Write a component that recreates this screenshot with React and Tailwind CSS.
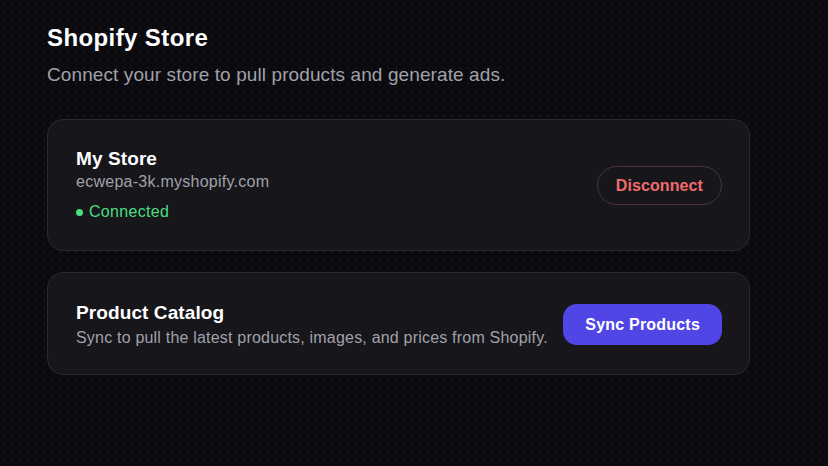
export default function App() {
  return (
    <div
      className="min-h-[466px] w-full bg-[#0a0a0f] bg-[radial-gradient(circle,rgba(255,255,255,0.045)_1px,transparent_1.2px)] bg-[length:8px_8px] px-[47px] pt-[22px] pb-10 text-white"
      style={{ fontFamily: '"Liberation Sans", Arial, sans-serif' }}
    >
      <div className="w-[703px]">
        <h1 className="text-[24px] font-bold leading-[32px] tracking-[0.4px]">Shopify Store</h1>
        <p className="mt-[7px] text-[19px] leading-[28px] tracking-[0.1px] text-[#a1a1aa]">
          Connect your store to pull products and generate ads.
        </p>

        {/* Store connection card */}
        <div className="mt-[30px] flex items-center justify-between rounded-[16px] border border-[#2a292f] bg-[#17161b] pt-[27px] pb-[26px] pl-[28px] pr-[27px]">
          <div className="flex flex-col">
            <span className="text-[19px] font-bold leading-[24px] tracking-[0.1px]">My Store</span>
            <span className="text-[16px] leading-[22px] tracking-[0.26px] text-[#a1a1aa]">ecwepa-3k.myshopify.com</span>
            <span className="mt-[7px] flex items-center gap-[6px] text-[16px] leading-[24px] tracking-[0.3px] text-[#4ade80]">
              <span className="h-[7px] w-[7px] rounded-full bg-[#4ade80]" />
              Connected
            </span>
          </div>
          <button className="h-[39px] rounded-full border border-[#4d3336] px-[18px] text-[16px] font-bold tracking-[0.1px] text-[#f16b6e]">
            Disconnect
          </button>
        </div>

        {/* Catalog sync card */}
        <div className="mt-[21px] flex items-center justify-between rounded-[16px] border border-[#2a292f] bg-[#17161b] pt-[28px] pb-[26px] pl-[28px] pr-[27px]">
          <div className="flex flex-col">
            <span className="text-[19px] font-bold leading-[24px] tracking-[0.1px]">Product Catalog</span>
            <span className="mt-[2px] text-[16px] leading-[21px] tracking-[0.2px] text-[#a1a1aa]">
              Sync to pull the latest products, images, and prices from Shopify.
            </span>
          </div>
          <button className="h-[41px] rounded-[14px] bg-[#4f46e5] px-[22px] text-[16px] font-bold tracking-[0.2px] text-white">
            Sync Products
          </button>
        </div>
      </div>
    </div>
  );
}
